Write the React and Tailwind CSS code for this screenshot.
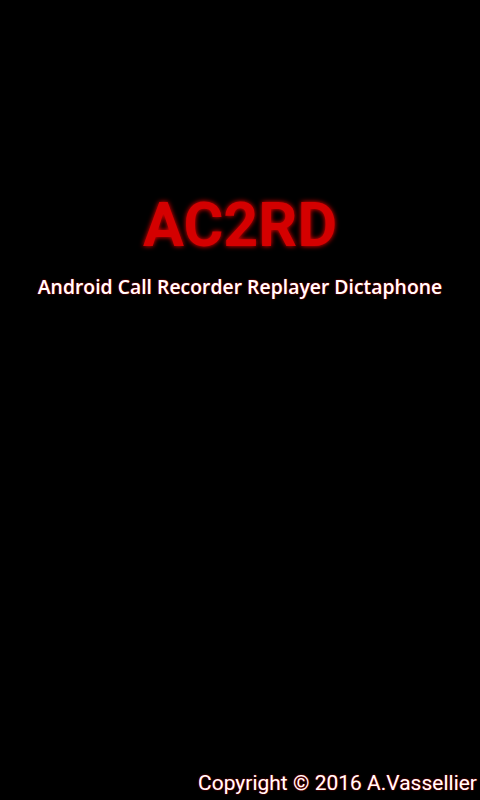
export default function App() {
  return (
    <div className="w-[480px] h-[800px] bg-black flex flex-col relative overflow-hidden">
      <div className="h-[190px]" />
      <div
        className="text-center text-[#d40000] font-bold text-[61px] leading-[70px]"
        style={{ fontFamily: "Roboto, sans-serif", textShadow: "0 0 5px #ff0000" }}
      >
        AC2RD
      </div>
      <div
        className="mt-[14px] text-center text-white font-semibold text-[19.4px] leading-[26px]"
        style={{ fontFamily: "'Open Sans', sans-serif", textShadow: "0 0 1.5px #ff0000" }}
      >
        Android Call Recorder Replayer Dictaphone
      </div>
      <div className="flex-1" />
      <div
        className="text-right pr-[3px] pb-[4px] text-white text-[21px] leading-[26px]"
        style={{ fontFamily: "Roboto, sans-serif", textShadow: "0 0 1.5px #ff0000" }}
      >
        Copyright © 2016 A.Vassellier
      </div>
    </div>
  );
}
